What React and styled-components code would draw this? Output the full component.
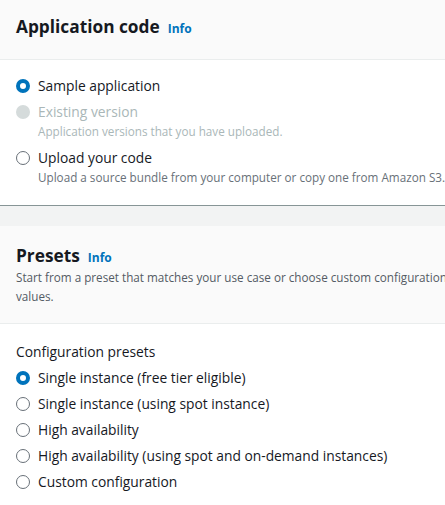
import React, { useState } from "react";
import styled, { createGlobalStyle } from "styled-components";

const GlobalStyle = createGlobalStyle`
  body {
    margin: 0;
    background: #f2f3f3;
    font-family: "Open Sans", "Noto Sans", sans-serif;
    color: #16191f;
  }
`;

const Page = styled.div`
  display: flex;
  flex-direction: column;
  gap: 20px;
  width: 445px;
  overflow: hidden;
`;

const Card = styled.section`
  background: white;
  border-bottom: 1px solid #879596;
  width: 490px;
  flex-shrink: 0;
`;

const CardHeader = styled.header`
  background: #fafafa;
  border-bottom: 1px solid #eaeded;
  padding: ${({ pad }) => pad || "13px 16px 16px"};
`;

const Title = styled.h2`
  margin: 0;
  font-size: 17.3px;
  font-weight: 700;
  line-height: ${({ lh }) => lh || "28px"};
  display: flex;
  align-items: baseline;
  gap: 8px;
`;

const Info = styled.a`
  font-size: 12px;
  font-weight: 700;
  color: #0073bb;
  text-decoration: none;
`;

const HeaderText = styled.p`
  margin: 0;
  font-size: 11.7px;
  line-height: 19px;
  color: #545b64;
`;

const Body = styled.div`
  padding: ${({ top }) => top || "16px"} 16px 16px;
`;

const Label = styled.div`
  font-size: 13.8px;
  line-height: 22px;
  margin-bottom: 4px;
`;

const Group = styled.div`
  display: flex;
  flex-direction: column;
  gap: 4px;
`;

const Option = styled.label`
  display: grid;
  grid-template-columns: 14px 1fr;
  column-gap: 8px;
  cursor: ${({ disabled }) => (disabled ? "default" : "pointer")};
`;

const Dot = styled.span`
  width: 14px;
  height: 14px;
  margin-top: 4px;
  box-sizing: border-box;
  border-radius: 50%;
  ${({ checked, disabled }) =>
    disabled
      ? "background: #d5dbdb;"
      : checked
      ? "background: white; border: 4.5px solid #0073bb;"
      : "background: white; border: 1.5px solid #687078;"}
`;

const OptionText = styled.span`
  font-size: 13.8px;
  line-height: 22px;
  color: ${({ disabled }) => (disabled ? "#aab7b8" : "#16191f")};
`;

const Description = styled.span`
  grid-column: 2;
  font-size: 11.7px;
  line-height: 16px;
  margin-bottom: 4px;
  color: ${({ disabled }) => (disabled ? "#aab7b8" : "#687078")};
  white-space: nowrap;
`;

const sourceOptions = [
  { id: "sample", label: "Sample application" },
  {
    id: "existing",
    label: "Existing version",
    description: "Application versions that you have uploaded.",
    disabled: true,
  },
  {
    id: "upload",
    label: "Upload your code",
    description:
      "Upload a source bundle from your computer or copy one from Amazon S3.",
  },
];

const presets = [
  { id: "single", label: "Single instance (free tier eligible)" },
  { id: "spot", label: "Single instance (using spot instance)" },
  { id: "ha", label: "High availability" },
  {
    id: "ha-spot",
    label: "High availability (using spot and on-demand instances)",
  },
  { id: "custom", label: "Custom configuration" },
];

function Radio({ option, checked, onSelect }) {
  return (
    <Option
      disabled={option.disabled}
      onClick={() => !option.disabled && onSelect(option.id)}
    >
      <Dot checked={checked} disabled={option.disabled} />
      <OptionText disabled={option.disabled}>{option.label}</OptionText>
      {option.description && (
        <Description disabled={option.disabled}>
          {option.description}
        </Description>
      )}
    </Option>
  );
}

export default function App() {
  const [source, setSource] = useState("sample");
  const [preset, setPreset] = useState("single");

  return (
    <Page>
      <GlobalStyle />
      <Card>
        <CardHeader>
          <Title>
            Application code <Info href="#">Info</Info>
          </Title>
        </CardHeader>
        <Body top="15px">
          <Group>
            {sourceOptions.map(o => (
              <Radio
                key={o.id}
                option={o}
                checked={source === o.id}
                onSelect={setSource}
              />
            ))}
          </Group>
        </Body>
      </Card>

      <Card>
        <CardHeader pad="19px 16px 17px">
          <Title lh="21px">
            Presets <Info href="#">Info</Info>
          </Title>
          <HeaderText>
            Start from a preset that matches your use case or choose custom
            configuration values.
          </HeaderText>
        </CardHeader>
        <Body top="17px">
          <Label>Configuration presets</Label>
          <Group>
            {presets.map(o => (
              <Radio
                key={o.id}
                option={o}
                checked={preset === o.id}
                onSelect={setPreset}
              />
            ))}
          </Group>
        </Body>
      </Card>
    </Page>
  );
}
